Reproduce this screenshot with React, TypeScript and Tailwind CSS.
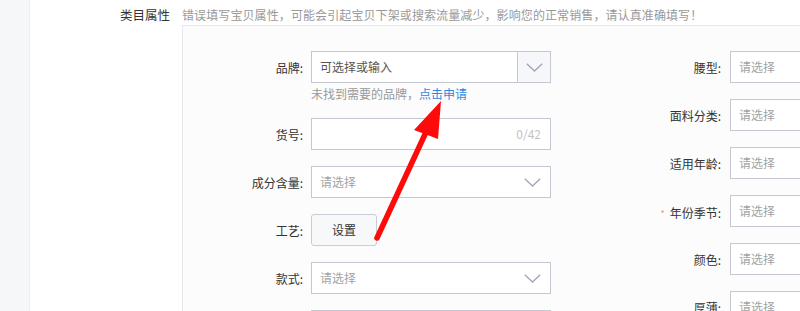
import React from "react";

// 类目属性 form fragment with a red annotation arrow pointing at the 点击申请 link

const LEFT_ROWS = [
  { label: "货号", kind: "count" as const },
  { label: "成分含量", kind: "select" as const },
  { label: "工艺", kind: "button" as const },
  { label: "款式", kind: "select" as const },
  { label: "风格", kind: "select" as const },
];

const RIGHT_ROWS = [
  { label: "腰型" },
  { label: "面料分类" },
  { label: "适用年龄" },
  { label: "年份季节", required: true },
  { label: "颜色" },
  { label: "厚薄" },
];

function Chevron({ className = "" }: { className?: string }) {
  return (
    <svg width="17" height="9" viewBox="0 0 17 9" className={className} fill="none">
      <path d="M0.8 0.8 L8.5 8 L16.2 0.8" stroke="#9ea6b6" strokeWidth="1.3" />
    </svg>
  );
}

function Label({ text, required }: { text: string; required?: boolean }) {
  return (
    <span className="inline-flex items-center text-[12px] leading-[16px] text-[#333]">
      {required && <span className="mr-[5px] mt-[1px] text-[9px] leading-[9px] text-[#f78a8a]">*</span>}
      {text}:
    </span>
  );
}

export default function App() {
  return (
    <div className="relative flex h-[311px] w-[800px] overflow-hidden bg-white font-['Noto_Sans_CJK_SC','Microsoft_YaHei',sans-serif] leading-[16px]">
      <div className="w-[30px] shrink-0 border-r border-[#eceef2] bg-[#f6f7f9]" />

      <div className="flex flex-1 flex-col">
        <div className="flex h-[25px] shrink-0 items-start pt-[7px]">
          <div className="w-[152px] shrink-0 pr-[12px] text-right text-[12.5px] leading-[16px] text-[#333]">
            类目属性
          </div>
          <div className="text-[12px] leading-[16px] tracking-[0.1px] text-[#999]">
            错误填写宝贝属性，可能会引起宝贝下架或搜索流量减少，影响您的正常销售，请认真准确填写！
          </div>
        </div>

        <div className="flex flex-1">
          <div className="w-[152px] shrink-0" />
          <div className="flex flex-1 border-l border-t border-[#e6e7ea] bg-[#fcfcfd] pt-[25px]">
            {/* left column */}
            <div className="flex w-[368px] shrink-0 flex-col gap-4">
              <div>
                <div className="flex items-center">
                  <div className="w-[128px] shrink-0 pr-[8px] text-right">
                    <Label text="品牌" />
                  </div>
                  <div className="flex h-[32px] w-[240px] border border-[#c5c8d0] bg-white">
                    <div className="flex flex-1 items-center px-[8px] text-[12px] text-[#555]">
                      可选择或输入
                    </div>
                    <div className="flex w-[33px] items-center justify-center border-l border-[#c5c8d0] bg-[#f5f7fa]">
                      <Chevron />
                    </div>
                  </div>
                </div>
                <div className="ml-[128px] mt-[2px] h-[17px] text-[12px] leading-[17px] text-[#999]">
                  未找到需要的品牌，<span className="text-[#2d8ae0]">点击申请</span>
                </div>
              </div>

              {LEFT_ROWS.map((r) => (
                <div key={r.label} className="flex items-center">
                  <div className="w-[128px] shrink-0 pr-[8px] text-right">
                    <Label text={r.label} />
                  </div>
                  {r.kind === "button" ? (
                    <div className="flex h-[32px] w-[66px] items-center justify-center rounded-[3px] border border-[#c9ccd4] bg-[#f7f8fa] text-[12px] text-[#333]">
                      设置
                    </div>
                  ) : (
                    <div className="flex h-[32px] w-[240px] items-center justify-between border border-[#c5c8d0] bg-white pl-[8px] pr-[9px] text-[12px]">
                      {r.kind === "select" ? (
                        <>
                          <span className="text-[#a3a3a3]">请选择</span>
                          <Chevron />
                        </>
                      ) : (
                        <>
                          <span />
                          <span className="text-[#c4c4c4]">0/42</span>
                        </>
                      )}
                    </div>
                  )}
                </div>
              ))}
            </div>

            {/* right column */}
            <div className="flex flex-col gap-4">
              {RIGHT_ROWS.map((r) => (
                <div key={r.label} className="flex items-center">
                  <div className="w-[179px] shrink-0 pr-[9px] text-right">
                    <Label text={r.label} required={r.required} />
                  </div>
                  <div className="flex h-[32px] w-[240px] shrink-0 items-center border border-[#c5c8d0] bg-white pl-[8px] text-[12px] text-[#a3a3a3]">
                    请选择
                  </div>
                </div>
              ))}
            </div>
          </div>
        </div>
      </div>

      {/* annotation arrow */}
      <svg className="pointer-events-none absolute left-0 top-0" width="800" height="311">
        <line x1="377" y1="238" x2="427" y2="130" stroke="#ff0a0a" strokeWidth="5.5" strokeLinecap="round" />
        <polygon points="441,101 414,130 438,139" fill="#ff0a0a" />
      </svg>
    </div>
  );
}
